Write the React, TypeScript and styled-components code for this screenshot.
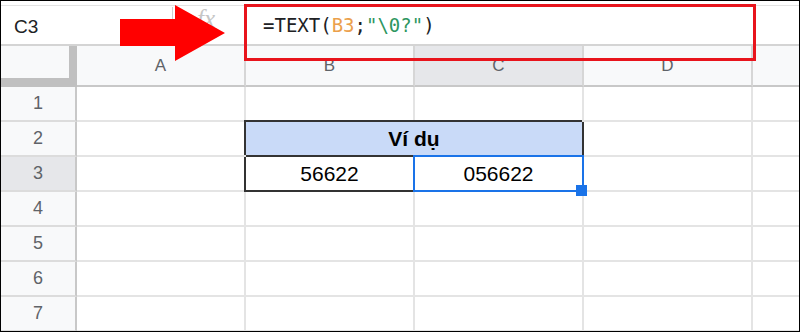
import React from "react";
import styled, { createGlobalStyle } from "styled-components";

const columns = ["A", "B", "C", "D", "E"];
const rows = [1, 2, 3, 4, 5, 6, 7];
const activeCol = "C";
const activeRow = 3;
// column E is only partly on screen, its label falls outside
const visibleLabels = ["A", "B", "C", "D"];

const renderRow = (row: number) => {
  if (row === 2) {
    return (
      <>
        <Cell />
        <TableCell $span={2} $bg="#c9daf8" $bold $edgeTop $edgeLeft>
          Ví dụ
        </TableCell>
        <Cell />
        <Cell />
      </>
    );
  }
  if (row === 3) {
    return (
      <>
        <Cell />
        <TableCell $edgeLeft>56622</TableCell>
        <TableCell $selected>
          056622
          <Selection />
          <FillHandle />
        </TableCell>
        <Cell />
        <Cell />
      </>
    );
  }
  return columns.map((c) => <Cell key={c} />);
};

const App = () => {
  return (
    <>
      <GlobalStyle />
      <Frame>
        <TopStrip />
        <FormulaBar>
          <NameBox>C3</NameBox>
          <Divider />
          <FxLabel>fx</FxLabel>
          <Formula>
            <Token>=TEXT(</Token>
            <Token $color="#eba04c">B3</Token>
            <Token>;</Token>
            <Token $color="#2e9660">{'"\\0?"'}</Token>
            <Token>)</Token>
          </Formula>
        </FormulaBar>
        <Sheet>
          <Corner />
          {columns.map((c) => (
            <ColHeader key={c} $active={c === activeCol}>
              {visibleLabels.includes(c) ? c : null}
            </ColHeader>
          ))}
          {rows.map((r) => (
            <React.Fragment key={r}>
              <RowHeader $active={r === activeRow}>{r}</RowHeader>
              {renderRow(r)}
            </React.Fragment>
          ))}
        </Sheet>
        <Callout />
        <Arrow viewBox="0 0 105 56" width="105" height="56">
          <polygon points="0,14 55,14 55,0 105,28 55,56 55,41 0,41" fill="#ff0000" />
        </Arrow>
      </Frame>
    </>
  );
};

export default App;

const GlobalStyle = createGlobalStyle`
  body {
    margin: 0;
    background: #fff;
    font-family: "Liberation Sans", Arial, sans-serif;
  }
  * {
    box-sizing: border-box;
  }
`;

const Frame = styled.div`
  position: relative;
  width: 800px;
  height: 332px;
  border: 1px solid #000;
  background: #fff;
  overflow: hidden;
  display: flex;
  flex-direction: column;
`;

const TopStrip = styled.div`
  height: 4px;
  flex-shrink: 0;
`;

const FormulaBar = styled.div`
  height: 41px;
  flex-shrink: 0;
  display: flex;
  align-items: center;
  border-top: 1px solid #e3e3e3;
  border-bottom: 2px solid #d4d4d4;
`;

const NameBox = styled.div`
  width: 171px;
  padding-left: 13px;
  padding-top: 4px;
  font-size: 19px;
  color: #202124;
`;

const Divider = styled.div`
  width: 1px;
  height: 30px;
  margin-top: -6px;
  background: #cfcfcf;
`;

const FxLabel = styled.div`
  width: 71px;
  padding-left: 24px;
  align-self: flex-start;
  margin-top: -1px;
  font-family: "Liberation Serif", serif;
  font-style: italic;
  font-size: 25px;
  line-height: 28px;
  color: #c6c6c6;
`;

const Formula = styled.div`
  padding-left: 19px;
  font-family: "DejaVu Sans Mono", "Liberation Mono", monospace;
  font-size: 19px;
  color: #202124;
  white-space: pre;
`;

const Token = styled.span<{ $color?: string }>`
  color: ${(p) => p.$color || "#202124"};
`;

const Sheet = styled.div`
  display: grid;
  grid-template-columns: 76px repeat(5, 169px);
  grid-template-rows: 41px repeat(7, 35px);
`;

const Corner = styled.div`
  background: #f8f9fa;
  border-right: 8px solid #c0c0c0;
  border-bottom: 9px solid #c0c0c0;
`;

const ColHeader = styled.div<{ $active?: boolean }>`
  display: flex;
  align-items: center;
  justify-content: center;
  background: ${(p) => (p.$active ? "#e6e7ea" : "#f8f9fa")};
  border-right: 2px solid #d6d6d6;
  border-bottom: 2px solid #c8c8c8;
  color: #5f6368;
  font-size: 17px;
`;

const RowHeader = styled.div<{ $active?: boolean }>`
  display: flex;
  align-items: center;
  justify-content: center;
  background: ${(p) => (p.$active ? "#e6e7ea" : "#f8f9fa")};
  border-right: 2px solid #c8c8c8;
  border-bottom: 2px solid #dcdcdc;
  color: #5f6368;
  font-size: 18px;
`;

const Cell = styled.div`
  border-right: 2px solid #e4e4e4;
  border-bottom: 2px solid #e4e4e4;
`;

const TableCell = styled.div<{
  $span?: number;
  $bg?: string;
  $bold?: boolean;
  $edgeTop?: boolean;
  $edgeLeft?: boolean;
  $selected?: boolean;
}>`
  position: relative;
  z-index: ${(p) => (p.$selected ? 3 : 1)};
  grid-column: span ${(p) => p.$span || 1};
  display: flex;
  align-items: center;
  justify-content: center;
  background: ${(p) => p.$bg || "#fff"};
  border-right: 2px solid #333;
  border-bottom: 2px solid #333;
  box-shadow: ${(p) =>
    p.$edgeTop && p.$edgeLeft
      ? "-2px -2px 0 0 #333"
      : p.$edgeLeft
      ? "-2px 0 0 0 #333"
      : "none"};
  font-size: 21px;
  font-weight: ${(p) => (p.$bold ? 700 : 400)};
  color: #000;
`;

const Selection = styled.div`
  position: absolute;
  top: -2px;
  left: -2px;
  right: -2px;
  bottom: -2px;
  border: 2px solid #1a73e8;
  pointer-events: none;
`;

const FillHandle = styled.div`
  position: absolute;
  right: -5px;
  bottom: -6px;
  width: 11px;
  height: 11px;
  background: #1a73e8;
`;

const Callout = styled.div`
  position: absolute;
  left: 243px;
  top: 3px;
  width: 512px;
  height: 57px;
  border: 3px solid #e8141c;
  pointer-events: none;
`;

const Arrow = styled.svg`
  position: absolute;
  left: 119px;
  top: 4px;
`;
